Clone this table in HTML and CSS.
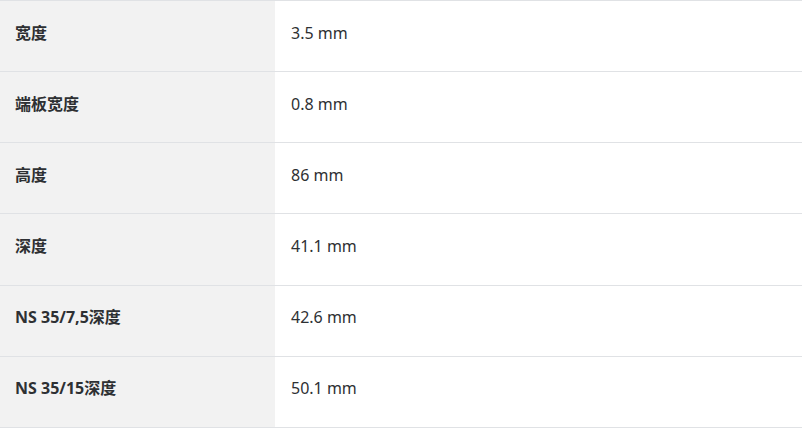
FILE: index.html
```html
<!DOCTYPE html>
<html lang="zh">
<head>
<meta charset="utf-8">
<link rel="stylesheet" href="styles.css">
</head>
<body>
<div class="spec">
  <div class="row"><div class="label">宽度</div><div class="value">3.5 mm</div></div>
  <div class="row"><div class="label">端板宽度</div><div class="value">0.8 mm</div></div>
  <div class="row"><div class="label">高度</div><div class="value">86 mm</div></div>
  <div class="row"><div class="label">深度</div><div class="value">41.1 mm</div></div>
  <div class="row"><div class="label">NS 35/7,5深度</div><div class="value">42.6 mm</div></div>
  <div class="row"><div class="label">NS 35/15深度</div><div class="value">50.1 mm</div></div>
</div>
</body>
</html>
```
FILE: styles.css
```css
html, body {
  margin: 0;
  padding: 0;
  background: #ffffff;
}
.spec {
  width: 802px;
  font-family: "Noto Sans", "Noto Sans CJK SC", sans-serif;
  font-size: 16px;
  color: #2e3033;
  border-top: 1px solid #e0e2e5;
}
.row {
  display: grid;
  grid-template-columns: 275px 1fr;
  height: 71.17px;
  box-sizing: border-box;
  border-bottom: 1px solid #e0e2e5;
}
.label,
.value {
  display: flex;
  align-items: center;
  padding: 0 16px 7px 16px;
  line-height: 24px;
}
.label {
  background: #f2f2f2;
  font-weight: 700;
  padding-left: 15px;
}
.value {
  font-weight: 400;
}
```
